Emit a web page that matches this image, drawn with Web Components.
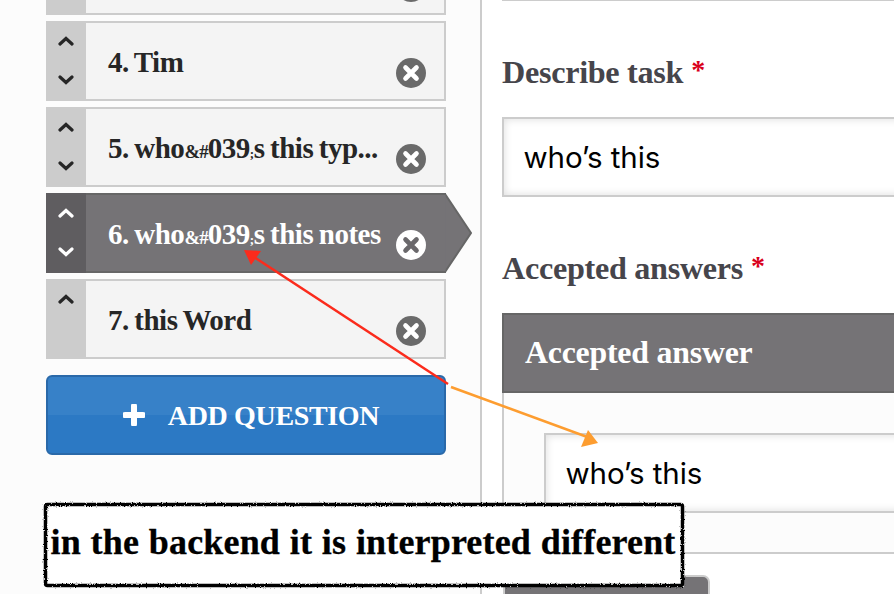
<!DOCTYPE html>
<html lang="en"><head><meta charset="utf-8"><title>Tasks</title>
<style>
html,body{margin:0;padding:0;background:#fff}
body{width:894px;height:594px;overflow:hidden;position:relative;font-family:"Liberation Serif",serif}
</style></head>
<body>
<editor-shell>
  <div slot="left">
    <q-item up down></q-item>
    <q-item up down>4. Tim</q-item>
    <q-item up down>5. who<small-g>&amp;#</small-g>039<small-g class="semi">;</small-g>s this typ...</q-item>
    <q-item up down active>6. who<small-g>&amp;#</small-g>039<small-g class="semi">;</small-g>s this notes</q-item>
    <q-item up>7. this Word</q-item>
    <add-button>ADD QUESTION</add-button>
  </div>
  <div slot="right">
    <text-box class="stub"></text-box>
    <field-label style="margin-top:51px">Describe task</field-label>
    <text-box>who’s this</text-box>
    <field-label style="margin-top:51px">Accepted answers</field-label>
    <answer-panel title-text="Accepted answer"><text-box>who’s this</text-box></answer-panel>
    <dark-button></dark-button>
  </div>
</editor-shell>
<arrow-layer></arrow-layer>
<note-box>in the backend it is interpreted different</note-box>
<script>
function def(name,html,setup){
  customElements.define(name,class extends HTMLElement{
    constructor(){super();const r=this.attachShadow({mode:'open'});r.innerHTML=typeof html==='function'?html(this):html;}
    connectedCallback(){if(setup)setup(this);}
  });
}
const chev=(d)=>`<svg width="16" height="10" viewBox="0 0 16 10"><polyline points="${d==='up'?'2,8 8,2.5 14,8':'2,2 8,7.5 14,2'}" fill="none" stroke="currentColor" stroke-width="3.200" stroke-linecap="round" stroke-linejoin="miter"/></svg>`;

def('editor-shell',`<style>
:host{display:flex;width:894px;height:594px;overflow:hidden}
.l{box-sizing:content-box;flex:none;width:400px;height:594px;padding:0 34px 0 46px;background:#fcfcfc;border-right:2px solid #ccc}
.r{flex:none;width:500px;padding-left:20px;height:594px}
</style><div class="l"><slot name="left"></slot></div><div class="r"><slot name="right"></slot></div>`);

def('small-g',`<style>:host{display:inline;font-size:.65em;line-height:0;letter-spacing:-.9px}:host(.semi){font-size:.45em;letter-spacing:-.3px}</style><slot></slot>`);

def('q-item',(el)=>{
  const up=el.hasAttribute('up'),down=el.hasAttribute('down'),act=el.hasAttribute('active');
  return `<style>
:host{display:flex;position:relative;height:80px;width:400px;margin-bottom:6px;color:#262626}
:host(:first-child){margin-top:-65px}
:host([active]){color:#fff}
.ctl{flex:none;width:40px;background:#ccc;display:flex;flex-direction:column;align-items:center;padding-top:15px;gap:29px;box-sizing:border-box}
:host([active]) .ctl{background:#5f5d60}
svg{display:block}
.body{flex:1;min-width:0;box-sizing:border-box;display:flex;align-items:center;background:#f4f4f4;border:2px solid #ccc;border-left:0;padding-left:22px;font:bold 29px/36px "Liberation Serif",serif}
:host([active]) .body{background:#757376;border-color:#666;}
.t{flex:1;min-width:0;white-space:nowrap;margin-top:1px;letter-spacing:-.5px;word-spacing:-1.2px}
close-icon{flex:none;align-self:flex-end;margin:0 18px 11px 0}
.tip{position:absolute;left:398px;top:0}
</style>
<div class="ctl">${up?chev('up'):''}${down?chev('down'):''}</div>
<div class="body"><span class="t"><slot></slot></span><close-icon ${act?'inv':''}></close-icon></div>
${act?'<svg class="tip" width="30" height="80" viewBox="0 0 30 80"><polygon points="0,1 1,1 27,40 1,79 0,79" fill="#757376" stroke="#666" stroke-width="2"/><rect x="-1" y="2" width="2.5" height="76" fill="#757376"/></svg>':''}`;
});

def('close-icon',(el)=>{
  const inv=el.hasAttribute('inv');
  return `<style>:host{display:block;width:30px;height:30px}svg{display:block}</style>
<svg width="30" height="30" viewBox="0 0 30 30"><circle cx="15" cy="15" r="15" fill="${inv?'#fff':'#6a6a6a'}"/><path d="M9.500 9.500L20.500 20.500M20.500 9.500L9.500 20.500" stroke="${inv?'#6a686b':'#fff'}" stroke-width="4.600" stroke-linecap="round"/></svg>`;
});

def('add-button',`<style>
:host{display:flex;box-sizing:border-box;width:400px;height:80px;margin-top:16px;align-items:center;justify-content:center;gap:23px;border:2px solid #2a69a9;border-radius:6px;color:#fff;background:linear-gradient(#3781c8 0,#3781c8 50%,#2c79c4 50%,#2c79c4 100%);font:bold 28px/36px "Liberation Serif",serif;letter-spacing:-.35px;padding-left:10px}
svg{display:block;flex:none}
span{position:relative;top:1px}
</style><svg width="22" height="22" viewBox="0 0 22 22"><path d="M11 2V20M2 11H20" stroke="#fff" stroke-width="6" stroke-linecap="round"/></svg><span><slot></slot></span>`);

def('field-label',`<style>
:host{display:block;height:40px;margin-bottom:25px;color:#46454b;font:bold 32.200px/41px "Liberation Serif",serif;white-space:nowrap;letter-spacing:-.3px}
.s{color:#d9001b;font-size:28px;margin-left:8px;position:relative;top:-4px}
</style><slot></slot><span class="s">*</span>`);

def('text-box',`<style>
:host{display:block;box-sizing:border-box;height:80px;width:480px;background:#fff;border:2px solid #ccc;box-shadow:inset 0 0 8px rgba(0,0,0,.14);padding-left:19.500px;color:#000;font:400 29.500px/76px Inter,"Liberation Sans",sans-serif;letter-spacing:-.1px;white-space:nowrap}
:host(.stub){margin-top:-79px}
</style><slot></slot>`);

def('answer-panel',(el)=>`<style>
:host{display:block;width:480px}
.h{box-sizing:border-box;height:80px;background:#757376;border:2px solid #666;border-right:0;padding-left:21px;color:#fff;font:bold 31.800px/76px "Liberation Serif",serif;letter-spacing:-.2px;white-space:nowrap}
.b{box-sizing:border-box;height:161px;background:#fcfcfc;border-left:2px solid #ccc;border-bottom:2px solid #ccc;padding:40px 0 0 40px}
</style><div class="h">${el.getAttribute('title-text')}</div><div class="b"><slot></slot></div>`);

def('dark-button',`<style>
:host{display:block;box-sizing:border-box;margin:21px 0 0 1px;width:207px;height:60px;background:#757376;border:2px solid #ccc;border-radius:7px}
</style>`);

def('arrow-layer',`<style>
:host{display:block;position:absolute;left:0;top:0;width:894px;height:594px;pointer-events:none}
svg{display:block}
</style><svg width="894" height="594" viewBox="0 0 894 594">
<line x1="254" y1="257" x2="448" y2="384" stroke="#fb2b1c" stroke-width="2.500"/>
<polygon points="244,250 261,251 251,265" fill="#fb2b1c"/>
<line x1="451" y1="387" x2="590" y2="438" stroke="#fd9d30" stroke-width="2.500"/>
<polygon points="598,443 588,430 581,447" fill="#fd9d30"/>
</svg>`);

def('note-box',`<style>
:host{display:block;position:absolute;left:44px;top:503px;width:640px;height:84px;box-sizing:border-box;background:#fff;color:#000;font:bold 36px/78px "Liberation Serif",serif;white-space:nowrap;text-align:center;-webkit-text-stroke:.3px #000}
svg{position:absolute;left:0;top:0;display:block;overflow:visible}
span{position:relative;left:-1px;letter-spacing:.16px;word-spacing:.6px}
</style><svg width="640" height="84" viewBox="0 0 640 84"><defs><filter id="r" x="-2%" y="-10%" width="104%" height="120%"><feTurbulence type="fractalNoise" baseFrequency=".8" numOctaves="2" seed="4"/><feDisplacementMap in="SourceGraphic" scale="3"/></filter></defs><rect x="1.500" y="1.500" width="637" height="81" rx="2" fill="none" stroke="#000" stroke-width="3.500" filter="url(#r)"/></svg><span><slot></slot></span>`);
</script>
</body></html>
